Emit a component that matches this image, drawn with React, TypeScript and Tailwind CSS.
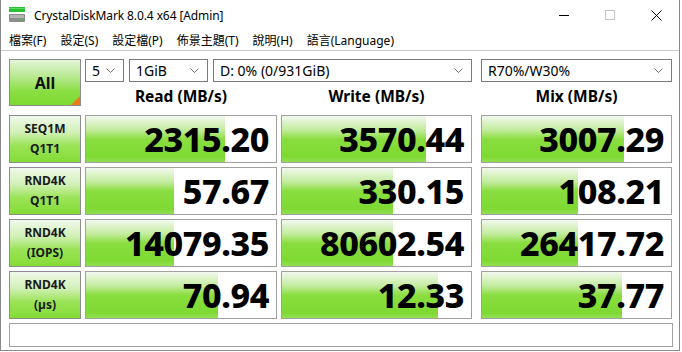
const rows = [
  { l1: "SEQ1M", l2: "Q1T1", vals: ["2315.20", "3570.44", "3007.29"], fills: [139, 144, 142] },
  { l1: "RND4K", l2: "Q1T1", vals: ["57.67", "330.15", "108.21"], fills: [88, 111, 96] },
  { l1: "RND4K", l2: "(IOPS)", vals: ["14079.35", "80602.54", "26417.72"], fills: [88, 111, 96] },
  { l1: "RND4K", l2: "(µs)", vals: ["70.94", "12.33", "37.77"], fills: [132, 156, 140] },
];

const menus = ["檔案(F)", "設定(S)", "設定檔(P)", "佈景主題(T)", "說明(H)", "語言(Language)"];

function Chevron() {
  return (
    <svg width="9" height="6" viewBox="0 0 9 6" className="shrink-0">
      <polyline points="0.5,0.5 4.5,4.5 8.5,0.5" fill="none" stroke="#707070" strokeWidth="1" />
    </svg>
  );
}

function Select({ w, text }: { w: string; text: string }) {
  return (
    <div className={`${w} h-[23px] flex items-center justify-between border border-[#7a7a7a] bg-white pl-[6px] pr-[8px] text-[14px] text-black`}>
      <span>{text}</span>
      <Chevron />
    </div>
  );
}

function Label({ l1, l2 }: { l1: string; l2: string }) {
  return (
    <div className="w-[72px] h-[48px] shrink-0 flex flex-col items-center justify-center border border-[#8c8c8c] bg-[linear-gradient(to_bottom,#f0f9ea_0%,#d2f0b8_35%,#9ae356_65%,#84dc36_100%)] text-[12px] font-bold leading-[20px] text-[#1a1a1a]">
      <span>{l1}</span>
      <span>{l2}</span>
    </div>
  );
}

function Cell({ w, ml, value, fill }: { w: string; ml: string; value: string; fill: number }) {
  return (
    <div className={`${w} ${ml} relative h-[48px] shrink-0 overflow-hidden border border-[#a0a0a0] bg-white`}>
      <div
        className="absolute left-0 top-0 bottom-0 bg-[linear-gradient(to_bottom,#f2f9ee_0%,#c4eca0_30%,#8ade40_50%,#7ed932_88%,#92df52_100%)]"
        style={{ width: fill }}
      />
      <div className="relative flex h-full items-center justify-end pr-[7px] text-[34px] font-extrabold tracking-[-0.4px] text-black">
        {value}
      </div>
    </div>
  );
}

export default function App() {
  const colW = ["w-[192px]", "w-[191px]", "w-[191px]"];
  const colMl = ["ml-[4px]", "ml-[4px]", "ml-[9px]"];

  return (
    <div className="w-[682px] h-[352px] bg-white overflow-hidden font-['Noto_Sans','Noto_Sans_CJK_TC',sans-serif]">
      <div className="w-[680px] h-[351px] border-l border-r border-b border-[#8a8a8a] flex flex-col">
        {/* Title bar */}
        <div className="h-[30px] flex items-center">
          <svg width="16" height="16" viewBox="0 0 16 16" className="ml-[8px]">
            <rect x="0" y="0" width="16" height="5" fill="#27c22f" />
            <rect x="0" y="1" width="16" height="1" fill="#5bd85f" />
            <rect x="0" y="7" width="16" height="8" rx="1" fill="#8c8c8c" />
            <rect x="1" y="8" width="14" height="3" fill="#b4b4b4" />
            <rect x="11" y="12" width="3" height="1" fill="#3ecf3a" />
          </svg>
          <span className="ml-[9px] pt-px text-[12px] tracking-[-0.1px] text-black">CrystalDiskMark 8.0.4 x64 [Admin]</span>
          <div className="ml-auto flex h-full">
            <div className="w-[46px] h-full flex items-center justify-center">
              <div className="w-[10px] h-px bg-black" />
            </div>
            <div className="w-[46px] h-full flex items-center justify-center">
              <div className="w-[10px] h-[10px] border border-[#c4c4c4]" />
            </div>
            <div className="w-[46px] h-full flex items-center justify-center">
              <svg width="11" height="11" viewBox="0 0 11 11">
                <path d="M0.5 0.5 L10.5 10.5 M10.5 0.5 L0.5 10.5" stroke="#000" strokeWidth="1" />
              </svg>
            </div>
          </div>
        </div>

        {/* Menu bar */}
        <div className="h-[20px] flex items-center gap-[14px] pl-[8px] pt-[2px] text-[12px] text-black">
          {menus.map((m) => (
            <span key={m}>{m}</span>
          ))}
        </div>
        <div className="h-px bg-[#c8c8c8]" />

        {/* Main panel */}
        <div className="flex flex-col pl-[8px] pt-[8px]">
          <div className="flex">
            <div className="relative w-[72px] h-[47px] shrink-0 flex items-center justify-center border border-[#8c8c8c] bg-[linear-gradient(to_bottom,#e4f5d8_0%,#b4e78a_40%,#8ade42_70%,#7ed932_100%)] text-[16px] font-bold text-[#111]">
              All
              <div className="absolute right-0 bottom-0 w-[9px] h-[9px] bg-[#f07a14] [clip-path:polygon(100%_0,100%_100%,0_100%)]" />
            </div>
            <div className="flex flex-col">
              <div className="flex">
                <Select w="w-[39px] ml-[4px]" text="5" />
                <Select w="w-[79px] ml-[5px]" text="1GiB" />
                <Select w="w-[259px] ml-[5px]" text="D: 0% (0/931GiB)" />
                <Select w="w-[191px] ml-[9px]" text="R70%/W30%" />
              </div>
              <div className="flex h-[29px] items-center text-[15.5px] font-bold text-black">
                <div className="w-[192px] ml-[4px] text-center">Read (MB/s)</div>
                <div className="w-[191px] ml-[4px] text-center">Write (MB/s)</div>
                <div className="w-[191px] ml-[9px] text-center">Mix (MB/s)</div>
              </div>
            </div>
          </div>

          <div className="flex flex-col gap-[4px] mt-[4px]">
            {rows.map((r, i) => (
              <div key={i} className="flex">
                <Label l1={r.l1} l2={r.l2} />
                {r.vals.map((v, j) => (
                  <Cell key={j} w={colW[j]} ml={colMl[j]} value={v} fill={r.fills[j]} />
                ))}
              </div>
            ))}
          </div>

          <div className="mt-[4px] w-[664px] h-[24px] border border-[#a0a0a0] bg-white" />
        </div>
      </div>
    </div>
  );
}
